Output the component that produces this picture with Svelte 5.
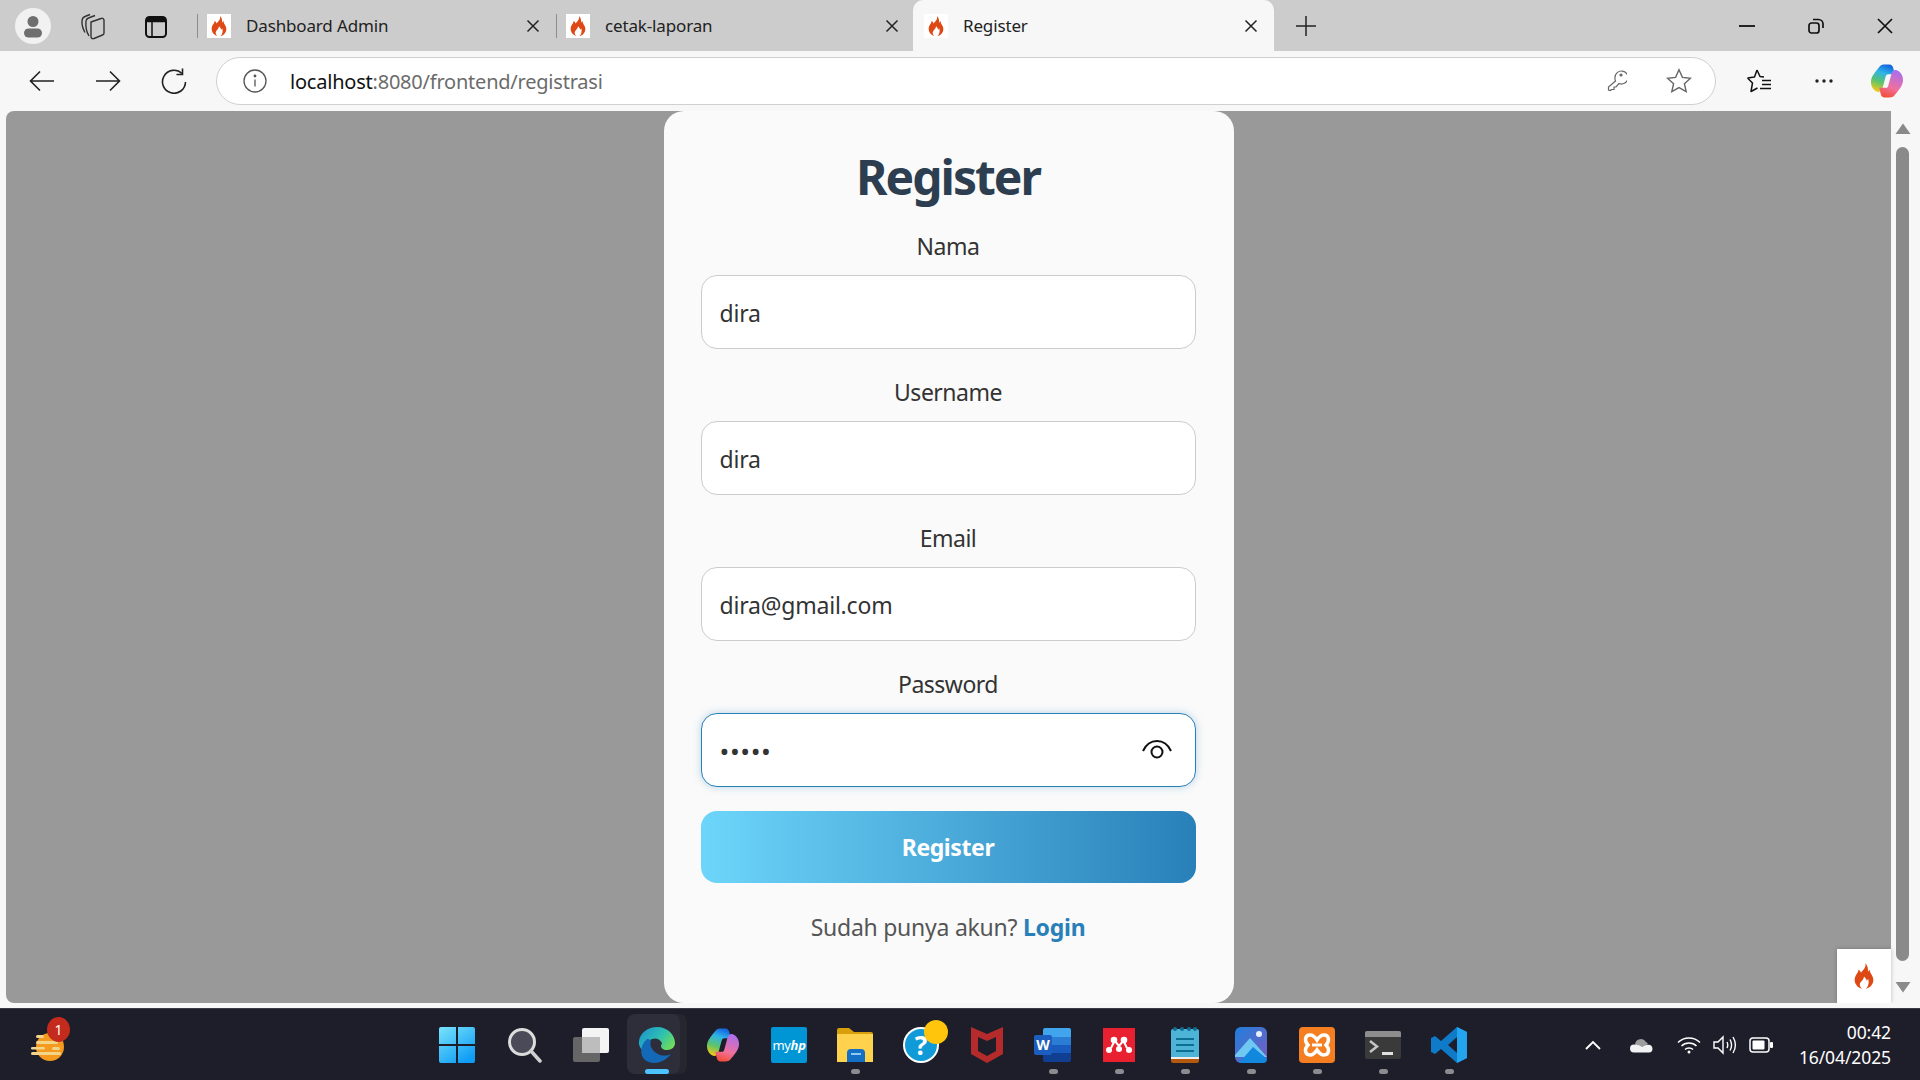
<script>
    const tabs = [
        { title: "Dashboard Admin", width: 359 },
        { title: "cetak-laporan", width: 357 }
    ];
    const fields = [
        { label: "Nama", type: "text", value: "dira" },
        { label: "Username", type: "text", value: "dira" },
        { label: "Email", type: "email", value: "dira@gmail.com" },
        { label: "Password", type: "password", value: "dirax", focus: true }
    ];
</script>

<svg class="defs" width="0" height="0" aria-hidden="true">
    <defs>
        <symbol id="flame" viewBox="0 0 24 24">
            <path fill="#dd4814" d="M13.2 1C14 5 11 6.8 9.4 9.2 9 8 8.3 7.3 7.2 6.4 7.6 9.2 4 11 4 15.4 4 19 6.8 22 10.2 23 8.2 21 7.8 19 9.2 17.2 10.4 15.8 11.8 14.8 12 12.4 13.6 13.8 14.2 15 14.2 16 15 15.6 15.4 15 15.6 14.4 16.4 17.6 16 21 13.6 23 17.4 22 20 19 20 15.2 20 11.4 16.8 10 17 6.6 16 7.4 15.6 8 15.4 8.6 15.6 5.6 15 2.6 13.2 1Z" />
        </symbol>
        <linearGradient id="cop1" x1="0.6" y1="0" x2="0.3" y2="1">
            <stop offset="0" stop-color="#1467e0" />
            <stop offset="0.3" stop-color="#2fb4e8" />
            <stop offset="0.65" stop-color="#5cc46a" />
            <stop offset="1" stop-color="#f7c916" />
        </linearGradient>
        <linearGradient id="cop2" x1="0.6" y1="0" x2="0.3" y2="1">
            <stop offset="0" stop-color="#f2503c" />
            <stop offset="0.35" stop-color="#f0709c" />
            <stop offset="1" stop-color="#a86ef2" />
        </linearGradient>
        <linearGradient id="winlogo" x1="0" y1="0" x2="0.7" y2="1">
            <stop offset="0" stop-color="#7ae4fb" />
            <stop offset="1" stop-color="#0f9cf5" />
        </linearGradient>
        <linearGradient id="edge1" x1="0" y1="0" x2="1" y2="0.6">
            <stop offset="0" stop-color="#1a8fd4" />
            <stop offset="0.6" stop-color="#2fc0b0" />
            <stop offset="1" stop-color="#6fdc5a" />
        </linearGradient>
        <linearGradient id="photo" x1="0" y1="0" x2="1" y2="1">
            <stop offset="0" stop-color="#1f7fdc" />
            <stop offset="1" stop-color="#7a5cc0" />
        </linearGradient>
        <symbol id="copilot" viewBox="0 0 35 36">
            <path fill="url(#cop1)" d="M10 3C11 1.500 13 1 15 1h5c2 0 3.500 1.500 4 4l1.500 6H19c-2 0-2.500 1-3 3l-3 11c-.5 3-3 5-5.500 4C4 28 1 24 1 19 1 13 6 8 10 3Z" />
            <path fill="url(#cop2)" transform="rotate(180 17.500 18)" d="M10 3C11 1.500 13 1 15 1h5c2 0 3.500 1.500 4 4l1.500 6H19c-2 0-2.500 1-3 3l-3 11c-.5 3-3 5-5.500 4C4 28 1 24 1 19 1 13 6 8 10 3Z" />
        </symbol>
    </defs>
</svg>

<div class="screen">
    <header class="tabstrip">
        <div class="profile">
            <svg width="36" height="36" viewBox="0 0 36 36"><circle cx="18" cy="18" r="18" fill="#f1f1f1" /><circle cx="18" cy="13.5" r="5.5" fill="#6f6f6f" /><rect x="9" y="20.5" width="18" height="9" rx="4.5" fill="#6f6f6f" /></svg>
        </div>
        <button class="strip-icon first" aria-label="Collections">
            <svg width="26" height="28" viewBox="0 0 26 28" fill="none" stroke="#333" stroke-width="1.400"><path d="M5 20.500C3 17 1.800 12 2 9c.2-3 1.500-4 3-4.500l5-2" /><path d="M9 24C6.500 20 5.500 14 6 9c.2-1.500 1-2.500 2.500-3L15 3.500" /><path d="M11 10l10-3.500a2 2 0 0 1 3 2V21a2 2 0 0 1-1.500 2L14 26.500a2 2 0 0 1-3-2Z" /></svg>
        </button>
        <button class="strip-icon" aria-label="Vertical tabs">
            <svg width="24" height="28" viewBox="0 0 24 28" fill="none" stroke="#111"><rect x="2" y="5" width="20" height="20" rx="3.500" stroke-width="2" /><path d="M2 8h20" stroke-width="4.500" /><path d="M8 9v15" stroke-width="1.500" /></svg>
        </button>

        <div class="tabs">
            {#each tabs as tab}
                <div class="tab" style="width: {tab.width}px">
                    <span class="favicon"><svg width="22" height="22"><use href="#flame" /></svg></span>
                    <span class="tab-title">{tab.title}</span>
                    <svg class="tab-close" width="14" height="14" viewBox="0 0 14 14" stroke="#222" stroke-width="1.500"><path d="M1.500 1.500l11 11M12.500 1.500l-11 11" /></svg>
                </div>
            {/each}
            <div class="tab active">
                <span class="favicon"><svg width="22" height="22"><use href="#flame" /></svg></span>
                <span class="tab-title">Register</span>
                <svg class="tab-close" width="14" height="14" viewBox="0 0 14 14" stroke="#222" stroke-width="1.500"><path d="M1.500 1.500l11 11M12.500 1.500l-11 11" /></svg>
            </div>
            <svg class="newtab" width="22" height="22" viewBox="0 0 22 22" stroke="#222" stroke-width="1.500"><path d="M11 1v20M1 11h20" /></svg>
        </div>

        <div class="winctl">
            <svg width="16" height="16" viewBox="0 0 16 16" stroke="#111" stroke-width="1.800"><path d="M0 8h16" /></svg>
            <svg width="16" height="18" viewBox="0 0 16 18" fill="none" stroke="#111" stroke-width="1.700"><rect x="1" y="6" width="10" height="10" rx="2.500" /><path d="M5 2.500h5.500c2.500 0 4.500 2 4.500 4.500v4" /></svg>
            <svg width="16" height="16" viewBox="0 0 16 16" stroke="#111" stroke-width="1.700"><path d="M1 1l14 14M15 1L1 15" /></svg>
        </div>
    </header>

    <nav class="toolbar">
        <svg class="nav-icon" width="26" height="22" viewBox="0 0 26 22" fill="none" stroke="#222" stroke-width="1.600"><path d="M25 11H1.500M11 1.500L1.500 11l9.500 9.500" /></svg>
        <svg class="nav-icon" width="26" height="22" viewBox="0 0 26 22" fill="none" stroke="#222" stroke-width="1.600"><path d="M1 11h23.500M15 1.500l9.500 9.500-9.500 9.500" /></svg>
        <svg class="nav-icon" width="26" height="26" viewBox="0 0 26 26" fill="none" stroke="#222" stroke-width="1.600"><path d="M21 5.500A11.500 11.500 0 1 0 24.500 14" /><path d="M21.500 .5V6.500H15.500" /></svg>

        <div class="address">
            <svg width="24" height="24" viewBox="0 0 24 24" fill="none" stroke="#555" stroke-width="1.300"><circle cx="12" cy="12" r="11" /><path d="M12 10.500v7" /><circle cx="12" cy="7" r=".8" fill="#555" /></svg>
            <span class="url"><span class="host">localhost</span>:8080/frontend/registrasi</span>
            <svg class="key" width="20" height="24" viewBox="0 0 20 24" fill="none" stroke="#666" stroke-width="1.200"><path d="M8 8.500a6.500 6.500 0 1 1 4 6l-3 3.500H7v2.500H4.500l-1 1-2-.5v-3L8.500 12a6 6 0 0 1-.5-3.500Z" /><circle cx="14" cy="6" r="1" fill="#666" /></svg>
            <svg class="star" width="26" height="26" viewBox="0 0 26 26" fill="none" stroke="#666" stroke-width="1.400"><path d="M13 1.800l3.400 7.600 8.100.8-6.100 5.500 1.800 8L13 19.600l-7.200 4.100 1.800-8L1.500 10.200l8.100-.8Z" /></svg>
        </div>

        <svg class="fav" width="26" height="26" viewBox="0 0 26 26" fill="none" stroke="#111" stroke-width="1.500"><path d="M11 2l3 6.500 4 .5M1.500 10l7-1L11 2M1.500 10l5 5-1.500 8.500 6.500-3.500" stroke-linejoin="round" /><path d="M16 12.500h9M16 16.500h9M14 20.500h11" /></svg>
        <svg class="more" width="20" height="6" viewBox="0 0 20 6" fill="#222"><circle cx="3" cy="3" r="1.700" /><circle cx="10" cy="3" r="1.700" /><circle cx="17" cy="3" r="1.700" /></svg>
        <svg class="copilot" width="34" height="36"><use href="#copilot" /></svg>
    </nav>

    <div class="viewport-wrap">
        <div class="viewport">
            <main class="page">
                <form class="card">
                    <h1>Register</h1>
                    {#each fields as field}
                        <label class="field">
                            <span class="field-label">{field.label}</span>
                            <span class="input-wrap">
                                <input class:focus={field.focus} type={field.type} value={field.value} />
                                {#if field.type === "password"}
                                    <svg class="eye" width="30" height="22" viewBox="0 0 30 22" fill="none" stroke="#111" stroke-width="2"><path d="M1 12C4 5.500 9 2 15 2s11 3.500 14 10" /><circle cx="15" cy="13" r="5.500" /></svg>
                                {/if}
                            </span>
                        </label>
                    {/each}
                    <button type="button" class="submit">Register</button>
                    <p class="switch">Sudah punya akun? <a href="#login">Login</a></p>
                </form>
                <div class="ci-debug">
                    <svg width="28" height="32"><use href="#flame" /></svg>
                </div>
            </main>
            <div class="scrollbar">
                <svg width="16" height="12" viewBox="0 0 16 12" fill="#8a8a8a"><path d="M8 .5L15.500 11H.5Z" /></svg>
                <div class="thumb"></div>
                <svg width="16" height="12" viewBox="0 0 16 12" fill="#8a8a8a"><path d="M8 11.500L15.500 1H.5Z" /></svg>
            </div>
        </div>
    </div>

    <footer class="taskbar">
        <div class="task-left">
            <span class="weather">
                <svg width="36" height="36" viewBox="0 0 36 36"><circle cx="20" cy="20" r="14" fill="#f39a1f" /><g fill="#f3d58a"><rect x="6" y="8" width="8" height="3" rx="1.500" /><rect x="6" y="14" width="22" height="3" rx="1.500" /><rect x="1" y="20" width="14" height="2.500" rx="1.200" /><rect x="22" y="20" width="8" height="3" rx="1.500" /><rect x="1" y="25" width="30" height="3" rx="1.500" /></g></svg>
                <span class="badge">1</span>
            </span>
        </div>

        <div class="task-icons">
            <div class="cell start">
                <svg width="36" height="36" viewBox="0 0 36 36"><g fill="url(#winlogo)"><path d="M2 0h15v17H0V2a2 2 0 0 1 2-2ZM19 0h15a2 2 0 0 1 2 2v15H19ZM0 19h17v17H2a2 2 0 0 1-2-2ZM19 19h17v15a2 2 0 0 1-2 2H19Z" /></g></svg>
            </div>
            <div class="cell">
                <svg width="36" height="36" viewBox="0 0 36 36"><circle cx="15" cy="15" r="12.500" fill="#4a4a58" stroke="#dcdcdc" stroke-width="3" /><path d="M24 24l9 10" stroke="#d0d0d0" stroke-width="3.500" stroke-linecap="round" /></svg>
            </div>
            <div class="cell">
                <svg width="36" height="36" viewBox="0 0 36 36"><rect x="0" y="10" width="27" height="25" rx="2" fill="#666" /><rect x="9" y="1" width="27" height="25" rx="2" fill="#f4f4f4" /><rect x="9" y="10" width="18" height="16" fill="#bdbdbd" /></svg>
            </div>
            <div class="cell running">
                <svg width="38" height="36" viewBox="0 0 38 36"><path d="M19 0C30 0 37 8 37 16c0 4-3 7-8 7-4 0-6-2-6-4 0-1 .5-2 1.200-2.500C22 12 18 10.500 14 12c-5 2-7 8-5 14C4 24 0 19 1 14 2 6 10 0 19 0Z" fill="url(#edge1)" /><path d="M9 12c-6 5-8 14-3 20 4 4 10 5 16 3 5-1.500 9-5 11-8-4 2-9 2-13 0-6-3-9-9-7-13-1.500-2-2.500-2-4-2Z" fill="#1368b8" /></svg>
                <span class="run-bar"></span>
            </div>
            <div class="cell">
                <svg width="34" height="36"><use href="#copilot" /></svg>
            </div>
            <div class="cell">
                <span class="myhp">my<i>hp</i></span>
            </div>
            <div class="cell open">
                <svg width="36" height="34" viewBox="0 0 36 34"><path d="M0 2a2 2 0 0 1 2-2h10l5 4h17a2 2 0 0 1 2 2v4H0Z" fill="#d99e0b" /><path d="M0 6h36v28H0Z" fill="#ffd24d" /><path d="M10 34v-9a4 4 0 0 1 4-4h10a4 4 0 0 1 4 4v9Z" fill="#1370c4" /><rect x="14" y="25" width="10" height="2" fill="#8fc8f2" /></svg>
            </div>
            <div class="cell">
                <span class="help">
                    <span class="help-ring">?</span>
                    <span class="help-dot"></span>
                </span>
            </div>
            <div class="cell">
                <svg width="32" height="36" viewBox="0 0 32 36"><path d="M0 0l16 7 16-7v27l-16 9L0 27ZM7 10v14l9 5 9-5V10l-9 4Z" fill="#b52b2b" fill-rule="evenodd" /></svg>
            </div>
            <div class="cell open">
                <span class="word">
                    <svg width="36" height="34" viewBox="0 0 36 34"><path d="M8 2a2 2 0 0 1 2-2h24a2 2 0 0 1 2 2v7H8Z" fill="#41a5ee" /><rect x="8" y="9" width="28" height="8" fill="#2b7cd3" /><rect x="8" y="17" width="28" height="8" fill="#185abd" /><path d="M8 25h28v7a2 2 0 0 1-2 2H10a2 2 0 0 1-2-2Z" fill="#103f91" /></svg>
                    <b>W</b>
                </span>
            </div>
            <div class="cell open">
                <svg width="32" height="34" viewBox="0 0 32 34"><rect width="32" height="34" fill="#e8202f" /><g fill="#fff"><circle cx="11" cy="12" r="3.300" /><circle cx="21" cy="12" r="3.300" /><circle cx="16" cy="21" r="3" /><circle cx="6" cy="22" r="3" /><circle cx="26" cy="22" r="3" /></g><path d="M11 12l5 6 5-6M8 20l3-6M24 20l-3-6" stroke="#fff" stroke-width="2" fill="none" /></svg>
            </div>
            <div class="cell open">
                <svg width="28" height="36" viewBox="0 0 28 36"><rect y="2" width="28" height="32" rx="2" fill="#4db4d8" /><path d="M0 30h28v4a2 2 0 0 1-2 2H2a2 2 0 0 1-2-2Z" fill="#b5590f" /><rect y="30" width="28" height="2" fill="#eee" /><g fill="#0f6f92"><circle cx="4" cy="2" r="2" /><circle cx="11" cy="2" r="2" /><circle cx="18" cy="2" r="2" /><circle cx="24" cy="2" r="2" /><rect x="5" y="11" width="18" height="2" /><rect x="5" y="17" width="18" height="2" /><rect x="5" y="23" width="18" height="2" /></g></svg>
            </div>
            <div class="cell open">
                <svg width="32" height="36" viewBox="0 0 32 36"><rect width="32" height="36" rx="6" fill="url(#photo)" /><circle cx="24" cy="7" r="3" fill="#e8eefc" /><path d="M0 28L15 11l17 19v0H0Z" fill="#6fc8f2" /><path d="M4 36l14-16 14 12v0a4 4 0 0 1-4 4Z" fill="#1188de" /></svg>
            </div>
            <div class="cell open">
                <svg width="36" height="36" viewBox="0 0 36 36"><rect width="36" height="36" rx="4" fill="#f47e20" /><path d="M11 8c-5 0-6 6-2 10-4 4-3 10 2 10 3 0 5-2 7-5 2 3 4 5 7 5 5 0 6-6 2-10 4-4 3-10-2-10-3 0-5 2-7 5-2-3-4-5-7-5Z" fill="none" stroke="#fff" stroke-width="3.500" /><path d="M13 18h10" stroke="#fff" stroke-width="3" /></svg>
            </div>
            <div class="cell open">
                <svg width="36" height="28" viewBox="0 0 36 28"><rect width="36" height="28" rx="2" fill="#3a3a3a" /><path d="M0 2a2 2 0 0 1 2-2h32a2 2 0 0 1 2 2v4H0Z" fill="#8d8d8d" /><path d="M5 10l7 5.500L5 21" fill="none" stroke="#c4c4c4" stroke-width="2.500" /><rect x="17" y="21" width="11" height="3" fill="#e0e0e0" /></svg>
            </div>
            <div class="cell open">
                <svg width="36" height="36" viewBox="0 0 36 36"><path d="M26 0l10 5v26l-10 5-16-14-6 5-4-2V11l4-2 6 5Zm0 10l-9 8 9 8Z" fill="#0f7ac8" fill-rule="evenodd" /><path d="M26 0l10 5v26l-10 5Z" fill="#23a4ee" /></svg>
            </div>
        </div>

        <div class="tray">
            <svg class="chevron" width="16" height="10" viewBox="0 0 16 10" fill="none" stroke="#fff" stroke-width="1.800"><path d="M1 9l7-7 7 7" /></svg>
            <svg class="cloud" width="24" height="16" viewBox="0 0 24 16"><path d="M5 7a6 6 0 0 1 11-2 5 5 0 0 1 2 2L8 12Z" fill="#9d9d9d" /><path d="M4 15.500a4 4 0 0 1 0-8c4 0 6 1 8 2.500 2-1.500 5-3 8-2 3 .5 4 7.500-1 7.500Z" fill="#f2f2f2" /></svg>
            <svg class="wifi" width="24" height="18" viewBox="0 0 24 18" fill="none" stroke="#fff" stroke-width="1.500"><path d="M1 6.500c6-6 16-6 22 0M4.500 10c4-4 11-4 15 0M8 13.500c2-2 6-2 8 0" /><circle cx="12" cy="16" r="1.500" fill="#fff" stroke="none" /></svg>
            <svg class="volume" width="24" height="20" viewBox="0 0 24 20" fill="none" stroke="#fff" stroke-width="1.400"><path d="M1 7v6h4l5 5V2L5 7Z" /><path d="M14 7c1 2 1 4 0 6M17 4.500c2 3.500 2 7.500 0 11M20 2c3 5 3 11 0 16" /></svg>
            <svg class="battery" width="24" height="16" viewBox="0 0 24 16"><rect x="1" y="1" width="19" height="14" rx="3" fill="none" stroke="#fff" stroke-width="1.500" /><rect x="3.500" y="3.500" width="12" height="9" rx="1" fill="#fff" /><rect x="21" y="5" width="3" height="6" rx="1" fill="#fff" /></svg>
            <div class="clock">
                <span>00:42</span>
                <span>16/04/2025</span>
            </div>
        </div>
    </footer>
</div>

<style>
    :global(body) {
        margin: 0;
        background: #f7f7f7;
        font-family: "Noto Sans", "Open Sans", sans-serif;
    }

    .defs {
        position: absolute;
    }

    .screen {
        width: 1920px;
        height: 1080px;
        display: flex;
        flex-direction: column;
        overflow: hidden;
    }

    /* baris tab */
    .tabstrip {
        height: 51px;
        flex-shrink: 0;
        background: #cccccc;
        display: flex;
        align-items: center;
    }
    .profile {
        margin-left: 15px;
        display: flex;
    }
    .strip-icon {
        border: none;
        background: none;
        padding: 0;
        margin-left: 38px;
        display: flex;
    }
    .strip-icon.first {
        margin-left: 29px;
    }
    .tabs {
        margin-left: 29px;
        display: flex;
        align-items: center;
        height: 100%;
    }
    .tab {
        box-sizing: border-box;
        height: 100%;
        display: flex;
        align-items: center;
        padding-left: 10px;
        position: relative;
        font-size: 17px;
        letter-spacing: -0.15px;
        color: #222;
    }
    .tab:not(.active)::before {
        content: "";
        position: absolute;
        left: 0;
        top: 14px;
        height: 24px;
        width: 1px;
        background: #8c8c8c;
    }
    .tab:nth-child(2) .tab-close {
        margin-right: 14px;
    }
    .tab.active {
        width: 361px;
        background: #f7f7f7;
        border-radius: 10px 10px 0 0;
        padding-left: 11px;
    }
    .favicon {
        width: 24px;
        height: 24px;
        background: #fff;
        display: flex;
        align-items: center;
        justify-content: center;
        flex-shrink: 0;
    }
    .tab-title {
        margin-left: 15px;
        flex: 1;
    }
    .tab-close {
        margin-right: 16px;
    }
    .newtab {
        margin-left: 21px;
    }
    .winctl {
        margin-left: auto;
        display: flex;
        align-items: center;
        gap: 53px;
        margin-right: 27px;
    }

    /* toolbar */
    .toolbar {
        height: 60px;
        flex-shrink: 0;
        display: flex;
        align-items: center;
        background: #f7f7f7;
    }
    .nav-icon {
        margin-left: 40px;
    }
    .nav-icon:first-child {
        margin-left: 29px;
    }
    .address {
        box-sizing: border-box;
        width: 1500px;
        height: 48px;
        margin-left: 29px;
        border: 1.500px solid #d0d0d0;
        border-radius: 24px;
        background: #fff;
        display: flex;
        align-items: center;
        padding-left: 26px;
    }
    .url {
        margin-left: 23px;
        font-size: 20px;
        letter-spacing: -0.22px;
        color: #6b6b6b;
    }
    .host {
        color: #111;
    }
    .key {
        margin-left: auto;
        margin-right: -8px;
    }
    .star {
        margin-left: 47px;
        margin-right: 23px;
    }
    .fav {
        margin-left: 30px;
    }
    .more {
        margin-left: 42px;
    }
    .copilot {
        margin-left: 36px;
    }

    /* area halaman */
    .viewport-wrap {
        flex: 1;
        min-height: 0;
        display: flex;
        padding: 0 6px 5px;
    }
    .viewport {
        flex: 1;
        display: flex;
        border-radius: 8px;
        overflow: hidden;
    }
    .page {
        flex: 1;
        background: #999999;
        display: flex;
        justify-content: center;
        position: relative;
    }
    .card {
        box-sizing: border-box;
        width: 570px;
        padding: 30px 38px 0 37px;
        background: #fafafa;
        border-radius: 20px;
    }
    h1 {
        margin: 0 0 17px;
        font-size: 48px;
        line-height: 72px;
        font-weight: 700;
        letter-spacing: -2px;
        text-align: center;
        color: #2c3e50;
    }
    .field {
        display: block;
        margin-bottom: 27px;
    }
    .field:last-of-type {
        margin-bottom: 24px;
    }
    .field-label {
        display: block;
        margin-bottom: 13px;
        font-size: 23px;
        line-height: 32px;
        letter-spacing: -0.5px;
        text-align: center;
        color: #333;
    }
    .input-wrap {
        display: block;
        position: relative;
    }
    input {
        box-sizing: border-box;
        display: block;
        width: 100%;
        height: 74px;
        padding: 2px 18px 0;
        border: 1.500px solid #ccc;
        border-radius: 16px;
        background: #fff;
        font-family: inherit;
        font-size: 23px;
        letter-spacing: -0.2px;
        color: #333;
        outline: none;
    }
    input.focus {
        border-color: #2980b9;
        box-shadow: 0 0 8px rgba(41, 128, 185, 0.3);
        font-size: 26px;
        letter-spacing: 0.6px;
    }
    .eye {
        position: absolute;
        right: 24px;
        top: 26px;
    }
    .submit {
        display: block;
        width: 100%;
        height: 72px;
        border: none;
        border-radius: 16px;
        background: linear-gradient(90deg, #6dd5fa, #2980b9);
        font-family: inherit;
        font-size: 23px;
        font-weight: 700;
        letter-spacing: -0.4px;
        color: #fff;
    }
    .switch {
        margin: 28px 0 0;
        font-size: 23px;
        line-height: 32px;
        letter-spacing: -0.25px;
        text-align: center;
        color: #555;
    }
    .switch a {
        color: #2980b9;
        font-weight: 700;
        text-decoration: none;
    }
    .ci-debug {
        position: absolute;
        right: 0;
        bottom: 0;
        width: 54px;
        height: 54px;
        background: #fff;
        box-shadow: 0 0 4px rgba(0, 0, 0, 0.25);
        display: flex;
        align-items: center;
        justify-content: center;
    }
    .scrollbar {
        width: 23px;
        background: #f7f7f7;
        display: flex;
        flex-direction: column;
        align-items: center;
        padding: 12px 0 10px;
        box-sizing: border-box;
    }
    .thumb {
        width: 13px;
        flex: 1;
        margin: 12px 0 20px;
        background: #8a8a8a;
        border-radius: 7px;
    }

    /* taskbar */
    .taskbar {
        height: 72px;
        flex-shrink: 0;
        box-sizing: border-box;
        border-top: 1px solid #3a3a44;
        background: #1e1e2a;
        display: flex;
        align-items: stretch;
    }
    .task-left {
        width: 426px;
        display: flex;
        align-items: center;
        padding-left: 30px;
        box-sizing: border-box;
    }
    .weather {
        position: relative;
        display: flex;
    }
    .badge {
        position: absolute;
        top: -10px;
        right: -4px;
        width: 23px;
        height: 25px;
        border-radius: 50%;
        background: #c42b1c;
        color: #fff;
        font-size: 14px;
        line-height: 25px;
        text-align: center;
    }
    .task-icons {
        display: grid;
        grid-template-columns: repeat(16, 66px);
    }
    .cell {
        position: relative;
        display: flex;
        align-items: center;
        justify-content: center;
    }
    .cell.start svg {
        margin-right: 4px;
    }
    .cell.running::before {
        content: "";
        position: absolute;
        left: 10px;
        right: 3px;
        top: 5px;
        bottom: 6px;
        background: #26262f;
        border-radius: 8px;
    }
    .cell.running::after {
        content: "";
        position: absolute;
        left: 3px;
        right: 10px;
        top: 5px;
        bottom: 6px;
        background: #2e2e3a;
        border-radius: 8px;
    }
    .cell.running svg {
        position: relative;
        z-index: 1;
    }
    .run-bar {
        position: absolute;
        z-index: 1;
        left: 21px;
        width: 24px;
        bottom: 6px;
        height: 5px;
        border-radius: 3px;
        background: #4cc2ff;
    }
    .cell.open::after {
        content: "";
        position: absolute;
        left: 29px;
        bottom: 6px;
        width: 9px;
        height: 5px;
        border-radius: 3px;
        background: #8b8b90;
    }
    .myhp {
        width: 36px;
        height: 36px;
        background: #0096d6;
        border-radius: 2px;
        color: #fff;
        font-size: 13px;
        line-height: 36px;
        text-align: center;
        letter-spacing: -0.3px;
    }
    .myhp i {
        font-weight: 700;
    }
    .help {
        position: relative;
        display: flex;
    }
    .help-ring {
        box-sizing: border-box;
        width: 36px;
        height: 36px;
        border: 2px solid #fff;
        border-radius: 50%;
        background: #109bd8;
        color: #fff;
        font-size: 26px;
        font-weight: 700;
        line-height: 32px;
        text-align: center;
    }
    .help-dot {
        position: absolute;
        top: -7px;
        right: -9px;
        width: 24px;
        height: 24px;
        border-radius: 50%;
        background: #ffc40c;
    }
    .word {
        position: relative;
        display: flex;
    }
    .word b {
        position: absolute;
        left: -1px;
        top: 7px;
        width: 18px;
        height: 20px;
        background: #1b5ebe;
        border-radius: 2px;
        color: #fff;
        font-size: 14px;
        line-height: 20px;
        text-align: center;
    }
    .tray {
        flex: 1;
        display: flex;
        align-items: center;
        color: #fff;
    }
    .chevron {
        margin-left: 103px;
    }
    .cloud {
        margin-left: 29px;
    }
    .wifi {
        margin-left: 23px;
    }
    .volume {
        margin-left: 12px;
    }
    .battery {
        margin-left: 12px;
    }
    .clock {
        margin-left: auto;
        margin-right: 29px;
        display: flex;
        flex-direction: column;
        align-items: flex-end;
        font-size: 17.500px;
        line-height: 25px;
        letter-spacing: -0.1px;
    }
</style>
